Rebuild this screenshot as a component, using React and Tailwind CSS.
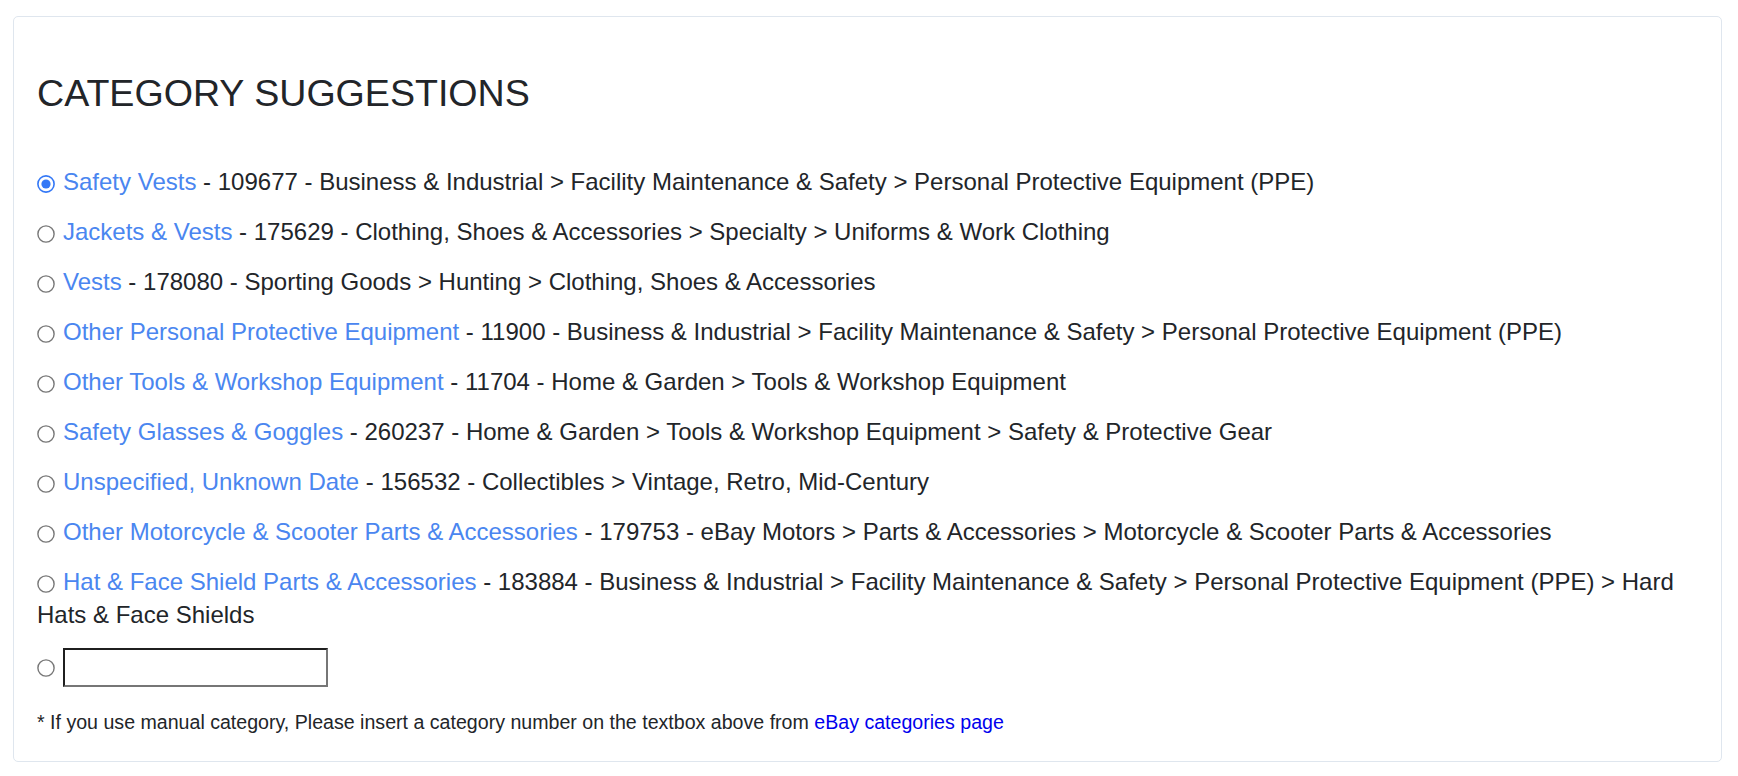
import React from "react";

const rows = [
  ["Safety Vests", "109677 - Business & Industrial > Facility Maintenance & Safety > Personal Protective Equipment (PPE)"],
  ["Jackets & Vests", "175629 - Clothing, Shoes & Accessories > Specialty > Uniforms & Work Clothing"],
  ["Vests", "178080 - Sporting Goods > Hunting > Clothing, Shoes & Accessories"],
  ["Other Personal Protective Equipment", "11900 - Business & Industrial > Facility Maintenance & Safety > Personal Protective Equipment (PPE)"],
  ["Other Tools & Workshop Equipment", "11704 - Home & Garden > Tools & Workshop Equipment"],
  ["Safety Glasses & Goggles", "260237 - Home & Garden > Tools & Workshop Equipment > Safety & Protective Gear"],
  ["Unspecified, Unknown Date", "156532 - Collectibles > Vintage, Retro, Mid-Century"],
  ["Other Motorcycle & Scooter Parts & Accessories", "179753 - eBay Motors > Parts & Accessories > Motorcycle & Scooter Parts & Accessories"],
  ["Hat & Face Shield Parts & Accessories", "183884 - Business & Industrial > Facility Maintenance & Safety > Personal Protective Equipment (PPE) > Hard Hats & Face Shields"],
];

function Radio({ checked }) {
  return (
    <svg width="18" height="18" viewBox="0 0 18 18" className="inline-block mr-[8px]">
      {checked ? (
        <>
          <circle cx="9" cy="9" r="8.1" fill="#fff" stroke="#3478f6" strokeWidth="1.6" />
          <circle cx="9" cy="9" r="4.6" fill="#3478f6" />
        </>
      ) : (
        <circle cx="9" cy="9" r="8.1" fill="#fff" stroke="#777" strokeWidth="1.4" />
      )}
    </svg>
  );
}

export default function App() {
  return (
    <div className="pt-[16px] pl-[13px] bg-white min-h-[776px] font-['Liberation_Sans',Arial,sans-serif] text-[#222529]">
      <div className="w-[1709px] h-[746px] border border-[#dfe6ee] rounded-[5px] pl-[23px] pr-[23px] pt-[54px]">
        <h2 className="text-[37.6px] leading-[45.6px] font-normal">CATEGORY SUGGESTIONS</h2>
        <div className="mt-[48.4px] flex flex-col gap-[16.4px] text-[24px] leading-[33.6px]">
          {rows.map(([name, rest], i) => (
            <div key={i}>
              <Radio checked={i === 0} />
              <a className="text-[#4a86f0]">{name}</a> - {rest}
            </div>
          ))}
        </div>
        <div className="mt-[16.4px] flex items-center">
          <Radio />
          <input
            type="text"
            className="w-[265px] h-[39px] border-2 border-t-[#1f1f1f] border-l-[#1f1f1f] border-b-[#767676] border-r-[#767676] bg-white outline-none"
          />
        </div>
        <p className="mt-[21px] text-[19.6px] leading-[29px]">
          * If you use manual category, Please insert a category number on the textbox above from{" "}
          <a className="text-[#0000ee]">eBay categories page</a>
        </p>
      </div>
    </div>
  );
}
